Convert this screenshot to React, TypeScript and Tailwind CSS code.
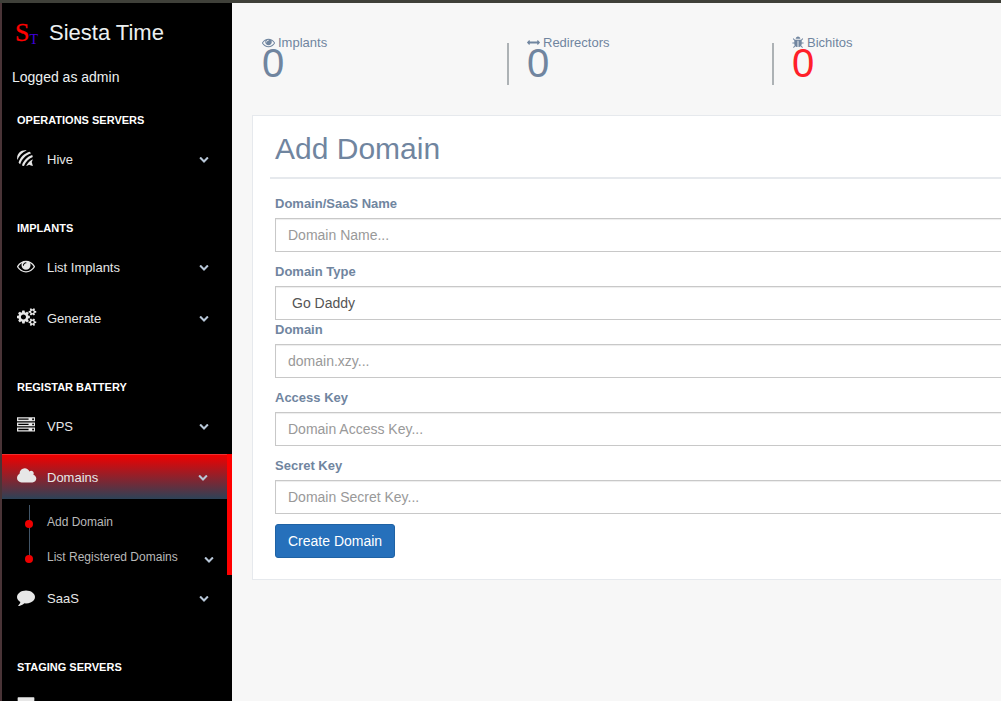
import type { ReactNode } from "react";
import { FaForumbee } from "react-icons/fa";

const paths = {
  eye: "M1664 960q-152-236-381-353 61 104 61 225 0 185-131.5 316.5t-316.5 131.5-316.5-131.5-131.5-316.5q0-121 61-225-229 117-381 353 133 205 333.5 326.5t434.5 121.5 434.5-121.5 333.5-326.5zm-720-384q0-20-14-34t-34-14q-125 0-214.5 89.5t-89.5 214.5q0 20 14 34t34 14 34-14 14-34q0-86 61-147t147-61q20 0 34-14t14-34zm848 384q0 34-20 69-140 230-376.5 368.5t-499.5 138.5-499.5-139-376.5-368q-20-35-20-69t20-69q140-229 376.5-368t499.5-139 499.5 139 376.5 368q20 35 20 69z",
  cogs: "M896 896q0-106-75-181t-181-75-181 75-75 181 75 181 181 75 181-75 75-181zm768 512q0-52-38-90t-90-38-90 38-38 90q0 53 37.5 90.5t90.5 37.5 90.5-37.5 37.5-90.5zm0-1024q0-52-38-90t-90-38-90 38-38 90q0 53 37.5 90.5t90.5 37.5 90.5-37.5 37.5-90.5zm-384 421v185q0 10-7 19.5t-16 10.5l-155 24q-11 35-32 76 34 48 90 115 7 11 7 20 0 12-7 19-23 30-82.5 89.5t-78.5 59.5q-11 0-21-7l-115-90q-37 19-77 31-11 108-23 155-7 24-30 24h-186q-11 0-20-7.5t-10-17.5l-23-153q-34-10-75-31l-118 89q-7 7-20 7-11 0-21-8-144-133-144-160 0-9 7-19 10-14 41-53t47-61q-23-44-35-82l-152-24q-10-1-17-9.5t-7-19.5v-185q0-10 7-19.5t16-10.5l155-24q11-35 32-76-34-48-90-115-7-11-7-20 0-12 7-20 22-30 82-89t79-59q11 0 21 7l115 90q34-18 77-32 11-108 23-154 7-24 30-24h186q11 0 20 7.5t10 17.5l23 153q34 10 75 31l118-89q8-7 20-7 11 0 21 8 144 133 144 160 0 8-7 19-12 16-42 54t-45 60q23 48 34 82l152 23q10 2 17 10.5t7 19.5zm640 533v140q0 16-149 31-12 27-30 52 51 113 51 138 0 4-4 7-122 71-124 71-8 0-46-47t-52-68q-20 2-30 2t-30-2q-14 21-52 68t-46 47q-2 0-124-71-4-3-4-7 0-25 51-138-18-25-30-52-149-15-149-31v-140q0-16 149-31 13-29 30-52-51-113-51-138 0-4 4-7 4-2 35-20t59-34 30-16q8 0 46 46.5t52 67.5q20-2 30-2t30 2q51-71 92-112l6-2q4 0 124 70 4 3 4 7 0 25-51 138 17 23 30 52 149 15 149 31zm0-1024v140q0 16-149 31-12 27-30 52 51 113 51 138 0 4-4 7-122 71-124 71-8 0-46-47t-52-68q-20 2-30 2t-30-2q-14 21-52 68t-46 47q-2 0-124-71-4-3-4-7 0-25 51-138-18-25-30-52-149-15-149-31v-140q0-16 149-31 13-29 30-52-51-113-51-138 0-4 4-7 4-2 35-20t59-34 30-16q8 0 46 46.5t52 67.5q20-2 30-2t30 2q51-71 92-112l6-2q4 0 124 70 4 3 4 7 0 25-51 138 17 23 30 52 149 15 149 31z",
  cloud: "M1920 1152q0 159-112.5 271.5t-271.5 112.5h-1088q-185 0-316.5-131.5t-131.5-316.5q0-132 71-241.5t187-163.5q-2-28-2-43 0-212 150-362t362-150q158 0 286.5 88t187.5 230q70-62 166-62 106 0 181 75t75 181q0 75-41 138 129 30 213 134.5t84 239.5z",
  server: "M128 1408h1024v-128h-1024v128zm0-512h1024v-128h-1024v128zm1568 448q0-40-28-68t-68-28-68 28-28 68 28 68 68 28 68-28 28-68zm-1568-960h1024v-128h-1024v128zm1568 448q0-40-28-68t-68-28-68 28-28 68 28 68 68 28 68-28 28-68zm0-512q0-40-28-68t-68-28-68 28-28 68 28 68 68 28 68-28 28-68zm96 832v384h-1792v-384h1792zm0-512v384h-1792v-384h1792zm0-512v384h-1792v-384h1792z",
  comment: "M1792 896q0 174-120 321.5t-326 233-450 85.5q-70 0-145-8-198 175-460 242-49 14-114 22h-5q-15 0-27-10.5t-16-27.5v-1q-3-4-.5-12t2-10 4.5-9.5l6-9 7-8.5 8-9q7-8 31-34.5t34.5-38 31-39.5 32.5-51 27-59 26-76q-157-89-247.5-220t-90.5-281q0-130 71-248.5t191-204.5 286-136.5 348-50.5 348 50.5 286 136.5 191 204.5 71 248.5z",
  chevron: "M1683 808l-742 741q-19 19-45 19t-45-19l-742-741q-19-19-19-45.5t19-45.5l166-165q19-19 45-19t45 19l531 531 531-531q19-19 45-19t45 19l166 165q19 19 19 45.5t-19 45.5z",
  bug: "M1696 960q0 26-19 45t-45 19h-224q0 171-67 290l208 209q19 19 19 45t-19 45q-18 19-45 19t-45-19l-198-197q-5 5-15 13t-42 28.5-65 36.5-82 29-97 13v-896h-128v896q-51 0-101.5-13.5t-87-33-66-39-43.5-32.5l-15-14-183 207q-20 21-48 21-24 0-43-16-19-18-20.5-44.5t15.5-46.5l202-227q-58-114-58-274h-224q-26 0-45-19t-19-45 19-45 45-19h224v-294l-173-173q-19-19-19-45t19-45 45-19 45 19l173 173h844l173-173q19-19 45-19t45 19 19 45-19 45l-173 173v294h224q26 0 45 19t19 45zm-480-576h-640q0-133 93.5-226.5t226.5-93.5 226.5 93.5 93.5 226.5z",
  arrows: "M1792 896q0 26-19 45l-256 256q-19 19-45 19t-45-19-19-45v-128h-1024v128q0 26-19 45t-45 19-45-19l-256-256q-19-19-19-45t19-45l256-256q19-19 45-19t45 19 19 45v128h1024v-128q0-26 19-45t45-19 45 19l256 256q19 19 19 45z",
  archive: "M1088 832q0-26-19-45t-45-19h-256q-26 0-45 19t-19 45 19 45 45 19h256q26 0 45-19t19-45zm576-192v960q0 26-19 45t-45 19h-1408q-26 0-45-19t-19-45v-960q0-26 19-45t45-19h1408q26 0 45 19t19 45zm64-448v256q0 26-19 45t-45 19h-1536q-26 0-45-19t-19-45v-256q0-26 19-45t45-19h1536q26 0 45 19t19 45z",
};

type IconName = keyof typeof paths;

function Icon({ name, className, viewBox = "0 0 1792 1792" }: { name: IconName; className: string; viewBox?: string }) {
  return (
    <svg viewBox={viewBox} aria-hidden="true" fill="currentColor" className={`shrink-0 overflow-visible ${className}`}>
      <path d={paths[name]} />
    </svg>
  );
}

function Chevron() {
  return <Icon name="chevron" className="mb-0.5 size-2.5 text-[#b8c7d8]" />;
}

function MenuItem({ icon, label, active = false }: { icon: ReactNode; label?: string; active?: boolean }) {
  return (
    <button
      type="button"
      aria-expanded={active}
      className={`flex h-[45px] w-full items-center pl-[15px] text-left text-[13px] text-[#e7e7e7] ${
        active
          ? "border-t border-[#f03030] bg-linear-to-b/srgb from-[#f00000] to-[#2c4257] pt-px pr-[19px]"
          : "pt-0.5 pr-[23px]"
      }`}
    >
      <span className="flex w-[30px] shrink-0 pb-1">{icon}</span>
      <span className="grow">{label}</span>
      <Chevron />
    </button>
  );
}

function Section({ title, children }: { title: string; children: ReactNode }) {
  return (
    <section className="flex flex-col">
      <h3 className="pl-[15px] text-[11px] leading-4 font-bold text-white uppercase">{title}</h3>
      <div className="mt-2 flex flex-col gap-1.5">{children}</div>
    </section>
  );
}

function SubItem({ label, last = false }: { label: string; last?: boolean }) {
  return (
    <li className="flex h-[35px] items-start pr-[13px]">
      <span className="relative mr-3 ml-[22px] flex h-full w-[11px] shrink-0 justify-center">
        <span className={`w-px bg-[#425668] ${last ? "h-5" : "h-full"}`} />
        <span className="absolute top-[15px] left-px size-2 rounded-full bg-[#ee0000]" />
      </span>
      <a href="#" className="mt-2 grow text-xs leading-[18px] text-[#b9b9b9]">
        {label}
      </a>
      {last && (
        <span className="mt-3.5">
          <Chevron />
        </span>
      )}
    </li>
  );
}

function Stat({ icon, label, value, alert = false }: { icon: ReactNode; label: string; value: number; alert?: boolean }) {
  return (
    <div className="flex h-[53px] w-[264px] shrink-0 flex-col">
      <span className="flex h-5 items-center gap-[3px] text-[13px] leading-5">
        {icon}
        {label}
      </span>
      <span className={`-mt-[13px] text-[40px] leading-[47px] ${alert ? "text-[#ff2029]" : ""}`}>{value}</span>
    </div>
  );
}

function Divider() {
  return <div className="mt-2.5 mr-[18px] -ml-[19px] h-[42px] w-0.5 shrink-0 bg-[#adb2b5]" />;
}

const control =
  "block h-[34px] w-full appearance-none border border-[#c8c8c8] bg-white px-3 text-sm text-[#555] shadow-[inset_0_1px_1px_rgba(0,0,0,0.075)] outline-none placeholder:text-[#999]";

function Field({ id, label, placeholder }: { id: string; label: string; placeholder: string }) {
  return (
    <div className="mb-2.5">
      <label htmlFor={id} className="mb-[5px] block text-[13px] leading-[19px] font-bold">
        {label}
      </label>
      <input id={id} type="text" placeholder={placeholder} className={control} />
    </div>
  );
}

export default function App() {
  return (
    <div className="flex h-screen flex-col overflow-hidden border-t-3 border-[#3f4039] bg-[#f7f7f7] font-['Liberation_Sans',Arial,sans-serif] text-[#70859f]">
      <div className="flex min-h-0 grow">
        <aside className="w-[232px] shrink-0 overflow-hidden border-l-2 border-[#4a3437] bg-black">
          <a href="#" className="flex h-[59px] items-center pl-3.5 text-[22px] text-[#ecf0f1]">
            <svg viewBox="0 0 24 28" aria-hidden="true" className="mr-[9px] h-7 w-6 font-['Liberation_Serif',serif]">
              <text x="-1" y="22" fontSize="26" fill="#f00" stroke="#f00" strokeWidth="0.3">S</text>
              <text x="13.5" y="25" fontSize="14" fill="#4000e0">T</text>
            </svg>
            Siesta Time
          </a>
          <p className="pt-[5px] pl-2.5 text-sm leading-5 text-[#ecf0f1]">Logged as admin</p>

          <nav className="mt-[25px] flex flex-col gap-[39px]">
            <Section title="Operations Servers">
              <MenuItem icon={<FaForumbee className="h-[18px] w-4" />} label="Hive" />
            </Section>
            <Section title="Implants">
              <MenuItem icon={<Icon name="eye" className="size-[18px]" />} label="List Implants" />
              <MenuItem icon={<Icon name="cogs" className="size-[18px]" />} label="Generate" />
            </Section>
            <Section title="Registar Battery">
              <MenuItem icon={<Icon name="server" className="size-[18px]" />} label="VPS" />
              <div className="-mb-1.5 border-r-5 border-[#ff0000]">
                <MenuItem icon={<Icon name="cloud" className="size-[18px]" />} label="Domains" active />
                <ul className="mt-1.5 flex flex-col">
                  <SubItem label="Add Domain" />
                  <SubItem label="List Registered Domains" last />
                </ul>
              </div>
              <MenuItem icon={<Icon name="comment" className="size-[18px]" />} label="SaaS" />
            </Section>
            <Section title="Staging Servers">
              <MenuItem icon={<Icon name="archive" className="size-[18px]" />} />
            </Section>
          </nav>
        </aside>

        <main className="min-w-0 grow overflow-hidden pl-5">
          <div className="flex pt-[30px] pl-2.5">
            <Stat icon={<Icon name="eye" className="mb-0.5 size-[13px]" />} label="Implants" value={0} />
            <Divider />
            <Stat icon={<Icon name="arrows" className="mb-0.5 size-[13px]" />} label="Redirectors" value={0} />
            <Divider />
            <Stat
              icon={<Icon name="bug" viewBox="64 0 1664 1792" className="mb-0.5 h-[13px] w-3" />}
              label="Bichitos"
              value={0}
              alert
            />
          </div>

          <section className="mt-[29px] -mr-10 border border-[#e6e9ed] bg-white px-[17px] pt-3 pb-[21px]">
            <h1 className="border-b-2 border-[#e6e9ed] pb-2 pl-[5px] text-[30px] leading-[41px]">Add Domain</h1>
            <form className="px-[5px] pt-[15px]" onSubmit={(e) => e.preventDefault()}>
              <Field id="name" label="Domain/SaaS Name" placeholder="Domain Name..." />
              <label htmlFor="type" className="mb-[5px] block text-[13px] leading-[19px] font-bold">
                Domain Type
              </label>
              <select id="type" className={`${control} pl-4`}>
                <option>Go Daddy</option>
              </select>
              <Field id="domain" label="Domain" placeholder="domain.xzy..." />
              <Field id="access" label="Access Key" placeholder="Domain Access Key..." />
              <Field id="secret" label="Secret Key" placeholder="Domain Secret Key..." />
              <button type="submit" className="h-[34px] rounded-[3px] border border-[#1f62a4] bg-[#2670bb] px-3 text-sm text-white">
                Create Domain
              </button>
            </form>
          </section>
        </main>
      </div>
    </div>
  );
}
